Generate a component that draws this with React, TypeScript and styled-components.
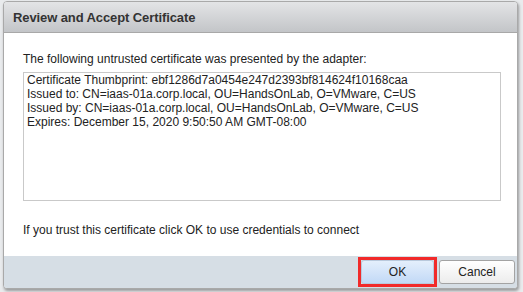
import * as React from 'react';
import styled, { createGlobalStyle } from 'styled-components';

const GlobalStyle = createGlobalStyle`
  html, body {
    margin: 0;
    padding: 0;
    background: #e9ebed;
    font-family: Arial, "Liberation Sans", sans-serif;
  }
`;

const Page = styled.div`
  width: 523px;
  height: 292px;
  padding: 1px 5px 0 3px;
  box-sizing: border-box;
  overflow: hidden;
`;

const Dialog = styled.div`
  width: 515px;
  height: 288px;
  display: flex;
  flex-direction: column;
  border: 1px solid #a9a9a9;
  border-radius: 4px;
  overflow: hidden;
  box-sizing: border-box;
  background: #fff;
  box-shadow: 1px 2px 3px rgba(0, 0, 0, 0.35);
`;

const Header = styled.div`
  height: 30px;
  flex: none;
  display: flex;
  align-items: center;
  padding-left: 9px;
  background: linear-gradient(#e3e4e6, #c3c5c8);
  border-bottom: 1px solid #a8a8a8;
  color: #333;
  font-size: 13px;
  font-weight: bold;
  letter-spacing: -0.1px;
`;

const Body = styled.div`
  flex: 1;
  padding: 19px 16px 0 19px;
  color: #222;
  font-size: 12px;
`;

const Intro = styled.div`
  line-height: 14px;
  margin-bottom: 6px;
`;

const CertBox = styled.div`
  height: 129px;
  box-sizing: border-box;
  border: 1px solid #c9c9c9;
  padding: 0 3px;
  line-height: 14px;
`;

const Trust = styled.div`
  margin-top: 22px;
  line-height: 14px;
`;

const Footer = styled.div`
  height: 32px;
  flex: none;
  display: flex;
  align-items: center;
  justify-content: flex-end;
  gap: 2px;
  padding-right: 2px;
  background: #d6dee5;
`;

const Highlight = styled.div`
  border: 3px solid #f12a2a;
  padding: 0;
  display: flex;
`;

const Button = styled.button<{ $primary?: boolean }>`
  height: ${(p) => (p.$primary ? '24px' : '24px')};
  width: ${(p) => (p.$primary ? '73px' : '76px')};
  border: 1px solid ${(p) => (p.$primary ? '#b9c9dc' : '#a3a3a3')};
  border-radius: 3px;
  background: ${(p) =>
    p.$primary
      ? 'linear-gradient(#e4effc, #c2d9f6)'
      : 'linear-gradient(#ffffff, #ececec)'};
  font-family: Arial, "Liberation Sans", sans-serif;
  font-size: 12px;
  color: #222;
  padding: 0;
`;

export default function App() {
  return (
    <>
      <GlobalStyle />
      <Page>
        <Dialog>
          <Header>Review and Accept Certificate</Header>
          <Body>
            <Intro>The following untrusted certificate was presented by the adapter:</Intro>
            <CertBox>
              <div>Certificate Thumbprint: ebf1286d7a0454e247d2393bf814624f10168caa</div>
              <div>Issued to: CN=iaas-01a.corp.local, OU=HandsOnLab, O=VMware, C=US</div>
              <div>Issued by: CN=iaas-01a.corp.local, OU=HandsOnLab, O=VMware, C=US</div>
              <div>Expires: December 15, 2020 9:50:50 AM GMT-08:00</div>
            </CertBox>
            <Trust>If you trust this certificate click OK to use credentials to connect</Trust>
          </Body>
          <Footer>
            <Highlight>
              <Button $primary>OK</Button>
            </Highlight>
            <Button>Cancel</Button>
          </Footer>
        </Dialog>
      </Page>
    </>
  );
}
